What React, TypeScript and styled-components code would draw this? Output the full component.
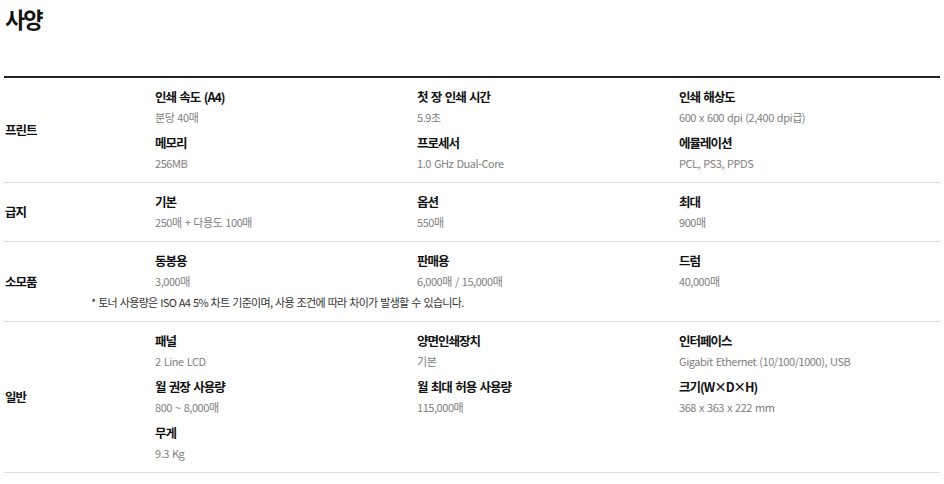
import React from 'react';
import styled, {createGlobalStyle} from 'styled-components';

const GlobalStyle = createGlobalStyle`
    body {
        margin: 0;
        background: #fff;
        font-family: "Noto Sans CJK KR", "Noto Sans", sans-serif;
        color: #111;
    }
`

type Spec = {title: string, value: string}
type Group = {label: string, items: Spec[], note?: string}

const groups: Group[] = [
    {label: '프린트', items: [
        {title: '인쇄 속도 (A4)', value: '분당 40매'},
        {title: '첫 장 인쇄 시간', value: '5.9초'},
        {title: '인쇄 해상도', value: '600 x 600 dpi (2,400 dpi급)'},
        {title: '메모리', value: '256MB'},
        {title: '프로세서', value: '1.0 GHz Dual-Core'},
        {title: '에뮬레이션', value: 'PCL, PS3, PPDS'},
    ]},
    {label: '급지', items: [
        {title: '기본', value: '250매 + 다용도 100매'},
        {title: '옵션', value: '550매'},
        {title: '최대', value: '900매'},
    ]},
    {label: '소모품', items: [
        {title: '동봉용', value: '3,000매'},
        {title: '판매용', value: '6,000매 / 15,000매'},
        {title: '드럼', value: '40,000매'},
    ], note: '* 토너 사용량은 ISO A4 5% 차트 기준이며, 사용 조건에 따라 차이가 발생할 수 있습니다.'},
    {label: '일반', items: [
        {title: '패널', value: '2 Line LCD'},
        {title: '양면인쇄장치', value: '기본'},
        {title: '인터페이스', value: 'Gigabit Ethernet (10/100/1000), USB'},
        {title: '월 권장 사용량', value: '800 ~ 8,000매'},
        {title: '월 최대 허용 사용량', value: '115,000매'},
        {title: '크기(W×D×H)', value: '368 x 363 x 222 mm'},
        {title: '무게', value: '9.3 Kg'},
    ]},
]

const App: React.FC<{}> = () => {
    return (
        <>
            <GlobalStyle />
            <Page>
                <Heading>사양</Heading>
                <SpecTable>
                    {groups.map(group => {
                        return <Row key={group.label}>
                            <Label>{group.label}</Label>
                            <Content>
                                <Items>
                                    {group.items.map(item => {
                                        return <Item key={item.title}>
                                            <ItemTitle>{item.title}</ItemTitle>
                                            <ItemValue>{item.value}</ItemValue>
                                        </Item>
                                    })}
                                </Items>
                                {!!group.note && <Note>{group.note}</Note>}
                            </Content>
                        </Row>
                    })}
                </SpecTable>
            </Page>
        </>
    )
}

const Page = styled.div`
    width: 936px;
    margin: 0 4px;
`

const Heading = styled.h2`
    margin: 0;
    padding: 2px 0 0 1px;
    height: 74px;
    font-size: 22px;
    line-height: 32px;
    font-weight: 700;
    letter-spacing: -2px;
    color: #111;
`

const SpecTable = styled.div`
    border-top: 2px solid #222;
`

const Row = styled.div`
    display: flex;
    align-items: center;
    border-bottom: 1px solid #ddd;
    padding: 9px 0 9px;
`

const Label = styled.div`
    width: 151px;
    flex-shrink: 0;
    padding-left: 1px;
    box-sizing: border-box;
    font-size: 12.5px;
    font-weight: 700;
    line-height: 20px;
    letter-spacing: -1px;
    color: #111;
`

const Content = styled.div`
    flex: 1;
`

const Items = styled.div`
    display: grid;
    grid-template-columns: repeat(3, 262px);
    row-gap: 6px;
`

const Item = styled.div`
    display: flex;
    flex-direction: column;
`

const ItemTitle = styled.p`
    margin: 0;
    font-size: 12.5px;
    font-weight: 700;
    line-height: 20px;
    letter-spacing: -1px;
    word-spacing: 1.5px;
    color: #111;
`

const ItemValue = styled.p`
    margin: 0;
    font-size: 11px;
    line-height: 20px;
    letter-spacing: -0.45px;
    word-spacing: 1px;
    color: #808080;
`

const Note = styled.p`
    margin: 1px 0 0 -64px;
    font-size: 11px;
    line-height: 20px;
    letter-spacing: -0.7px;
    word-spacing: 1px;
    color: #333;
`

export default App
